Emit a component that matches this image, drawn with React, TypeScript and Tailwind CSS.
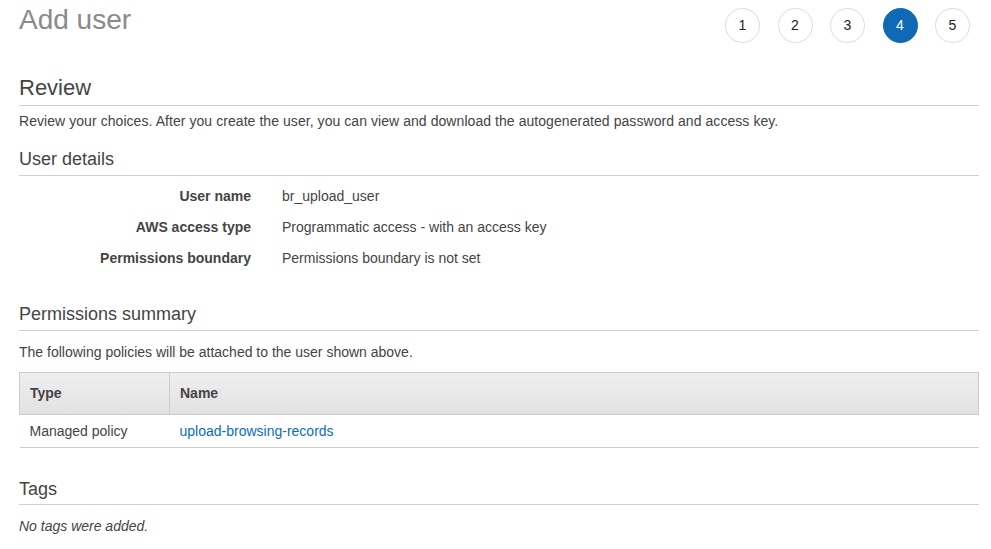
import React from 'react'

const steps = [1, 2, 3, 4, 5]
const current = 4

const details = [
  { label: 'User name', value: 'br_upload_user' },
  { label: 'AWS access type', value: 'Programmatic access - with an access key' },
  { label: 'Permissions boundary', value: 'Permissions boundary is not set' }
]

const App: React.FC = () => {
  return (
    <div
      className="min-h-screen bg-white pl-[19px] pr-[12px] text-[14px] text-[#444]"
      style={{ fontFamily: '"Liberation Sans", Arial, Helvetica, sans-serif' }}
    >
      {/* header + wizard steps */}
      <div className="flex items-start justify-between pt-[3px]">
        <h1 className="text-[28px] leading-[34px] font-normal text-[#8a8a8a]">Add user</h1>
        <div className="mt-[5px] mr-[9px] flex gap-[17.5px]">
          {steps.map(n => (
            <div
              key={n}
              className={
                n === current
                  ? 'flex h-[35px] w-[35px] items-center justify-center rounded-full border border-[#0f69b4] bg-[#0f69b4] text-[14px] text-white'
                  : 'flex h-[35px] w-[35px] items-center justify-center rounded-full border border-[#dcdcdc] bg-white text-[14px] text-[#222]'
              }
            >
              {n}
            </div>
          ))}
        </div>
      </div>

      {/* Review */}
      <h2 className="mt-[32px] border-b border-[#cfcfcf] pb-[4px] text-[22px] leading-[26px] font-normal text-[#444]">
        Review
      </h2>
      <p className="mt-[5px] leading-[20px] tracking-[0.06px]">
        Review your choices. After you create the user, you can view and download the autogenerated password and access key.
      </p>

      {/* User details */}
      <h3 className="mt-[17px] border-b border-[#cfcfcf] pb-[5px] text-[18px] leading-[22px] font-normal text-[#444]">
        User details
      </h3>
      <div className="mt-[10px] flex flex-col gap-[11px]">
        {details.map(d => (
          <div key={d.label} className="flex leading-[20px]">
            <div className="w-[232px] text-right font-bold text-[#444]">{d.label}</div>
            <div className="ml-[31px]">{d.value}</div>
          </div>
        ))}
      </div>

      {/* Permissions summary */}
      <h3 className="mt-[35px] border-b border-[#cfcfcf] pb-[5px] text-[18px] leading-[22px] font-normal text-[#444]">
        Permissions summary
      </h3>
      <p className="mt-[11px] leading-[20px]">The following policies will be attached to the user shown above.</p>

      <table className="mt-[10px] w-full border-collapse">
        <thead>
          <tr className="bg-gradient-to-b from-[#efefef] to-[#e1e1e1]">
            <th className="h-[42px] w-[150px] border border-[#cccccc] pl-[10px] text-left font-bold text-[#444]">Type</th>
            <th className="h-[42px] border border-[#cccccc] pl-[10px] text-left font-bold text-[#444]">Name</th>
          </tr>
        </thead>
        <tbody>
          <tr className="border-b border-[#cccccc]">
            <td className="h-[33px] pl-[10px]">Managed policy</td>
            <td className="h-[33px] pl-[10px]">
              <a href="#" className="text-[#0a6ebd] no-underline">upload-browsing-records</a>
            </td>
          </tr>
        </tbody>
      </table>

      {/* Tags */}
      <h3 className="mt-[30px] border-b border-[#cfcfcf] pb-[4px] text-[18px] leading-[22px] font-normal text-[#444]">
        Tags
      </h3>
      <p className="mt-[11px] leading-[20px] italic">No tags were added.</p>
    </div>
  )
}

export default App
